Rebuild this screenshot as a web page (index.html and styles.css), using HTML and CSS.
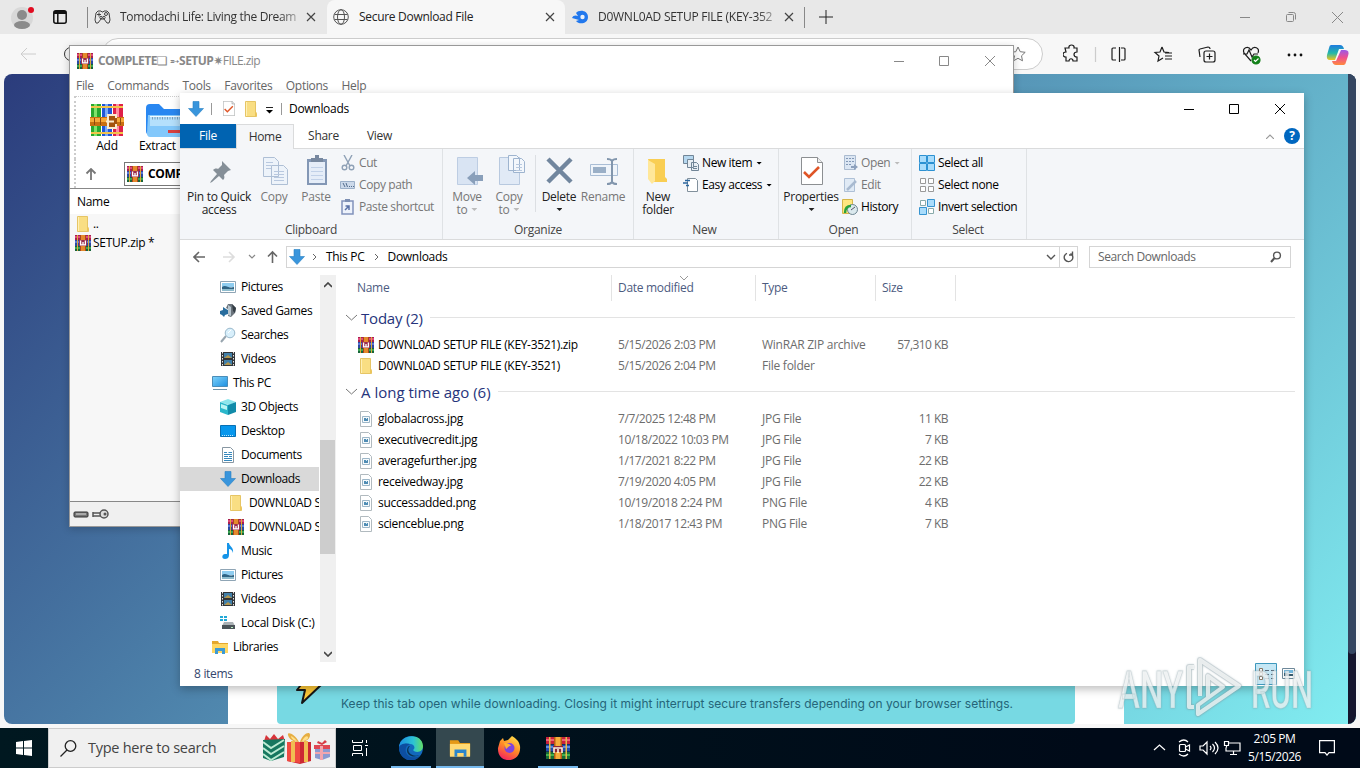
FILE: index.html
```html
<!DOCTYPE html>
<html lang="en">
<head>
<meta charset="utf-8">
<title>Desktop</title>
<link rel="stylesheet" href="styles.css">
</head>
<body>
<svg class="sprite" aria-hidden="true">
  <defs>
    <linearGradient id="gscreen" x1="0" y1="0" x2="1" y2="1"><stop offset="0" stop-color="#7fd3fb"/><stop offset="1" stop-color="#1c8fe0"/></linearGradient>
    <linearGradient id="gedge" x1="0" y1="0" x2="1" y2="0"><stop offset="0" stop-color="#1b8fe0"/><stop offset=".6" stop-color="#2cc3d4"/><stop offset="1" stop-color="#62dd65"/></linearGradient>
    <linearGradient id="gfox" x1=".8" y1="0" x2=".3" y2="1"><stop offset="0" stop-color="#ffe14a"/><stop offset=".5" stop-color="#ff8a26"/><stop offset="1" stop-color="#f5235f"/></linearGradient>
    <linearGradient id="gcopa" x1="0" y1="0" x2="0" y2="1"><stop offset="0" stop-color="#1d7be0"/><stop offset=".55" stop-color="#24b8a8"/><stop offset="1" stop-color="#f3c51c"/></linearGradient>
    <linearGradient id="gcopb" x1="0" y1="0" x2="0" y2="1"><stop offset="0" stop-color="#9b58e8"/><stop offset=".5" stop-color="#ee5090"/><stop offset="1" stop-color="#ff8a3c"/></linearGradient>
  </defs>
  <symbol id="rar" viewBox="0 0 16 16">
    <path fill="#a8204f" d="M0 0h16v5H0z"/><path fill="#e0497a" d="M0 1h16v2H0z"/>
    <path fill="#2a49a0" d="M0 5h16v6H0z"/><path fill="#5b78d8" d="M0 6h16v2H0z"/>
    <path fill="#17643a" d="M0 11h16v5H0z"/><path fill="#3aa552" d="M0 12h16v2H0z"/>
    <path fill="#d9a93c" d="M2 0h1v16H2zM13 0h1v16h-1z"/>
    <path fill="#a9441f" d="M5 0h6v16H5z"/><path fill="#e58a2c" d="M6 0h4v16H6z"/>
    <path fill="#9b2d4d" d="M4 5h8v6H4z"/><path fill="none" stroke="#fff" stroke-width="1.300" d="M5.600 5.500v4.400h4.800V5.500M8 7v3"/>
  </symbol>
  <symbol id="folder" viewBox="0 0 16 16"><path fill="#f9de83" stroke="#e6c565" d="M2.500.500h10v12h1v3h-11z"/><path fill="#fff0b5" d="M3 1h1v14H3z"/><path fill="#ecc55a" d="M12 11h1.500v4H12z"/></symbol>
  <symbol id="down" viewBox="0 0 16 16"><path fill="#3995dc" stroke="#277fc2" stroke-width=".6" d="M5 .5h6v7h4.5L8 15.500.5 7.500H5z"/></symbol>
  <symbol id="picture" viewBox="0 0 16 16"><path fill="#fff" stroke="#8fa5b5" d="M.5 2.500h15v11H.5z"/><path fill="#8fcdf0" d="M2 4h12v4H2z"/><path fill="#2f6484" d="M2 8c4-3 6 2 12 0v2H2z"/><path fill="#8ebccd" d="M2 10h12v2H2z"/></symbol>
  <symbol id="games" viewBox="0 0 16 16"><path fill="#6a737b" d="m8 1 4 0 4 4-1 5-4 4-3-1V6L6 5z"/><path fill="#b7c5ce" d="m8 2 3 2v9l-3-1z"/><path fill="#333d45" d="m12 1 4 4-1 5-2-2z"/><path fill="#286c9d" d="m0 8 3-1V4l3 2 2 1v4l-3 1-1 2-2-2-2-1z"/></symbol>
  <symbol id="search16" viewBox="0 0 16 16"><path stroke="#98a5af" stroke-width="2" d="m1 15 5-6"/><circle cx="10" cy="6" r="4.800" fill="#d8effb" stroke="#99b8cb"/><path stroke="#fff" d="m8 6 3-3"/></symbol>
  <symbol id="video" viewBox="0 0 16 16"><path fill="#303438" d="M1 1h14v14H1z"/><path fill="#4180aa" d="M4 2h8v5H4z"/><path fill="#4180aa" d="M4 9h8v5H4z"/><path fill="#b3964e" d="m4 7 4-3 4 3zM4 14l4-3 4 3z"/><path stroke="#e6e8e9" stroke-dasharray="1.500 1.500" d="M2.500 1v14M13.500 1v14"/></symbol>
  <symbol id="pc" viewBox="0 0 16 16"><path fill="url(#gscreen)" stroke="#4b8db8" d="M.5 1.500h15v10H.5z"/><path stroke="#6f94aa" d="M1 14.500h14"/></symbol>
  <symbol id="cube" viewBox="0 0 16 16"><path fill="#8ce6ec" d="m0 3 8-3 8 3-7 3z"/><path fill="#2bb7cb" d="m0 3 8 3v10l-8-3z"/><path fill="#118ba9" d="m8 6 8-3v10l-8 3z"/><path fill="#baf5f4" d="m1 5 6 2v4L1 9z"/></symbol>
  <symbol id="desk" viewBox="0 0 16 16"><path fill="#0797ed" stroke="#0870b4" d="M.5 2.500h15v11H.5z"/><path stroke="#b8e6ff" stroke-dasharray="1 1" d="M2 12.500h12"/></symbol>
  <symbol id="doc" viewBox="0 0 16 16"><path fill="#fff" stroke="#8897a2" d="M2.500.500h8l3 3v12h-11z"/><path stroke="#3588bd" d="M4 5.500h3M8.500 5.500H12M4 7.500h8M4 9.500h4M9 9.500h3M4 11.500h8M4 13.500h8"/></symbol>
  <symbol id="music" viewBox="0 0 16 16"><path fill="#1594e8" d="M7 0h2c0 3 5 4 4 10-1-3-2-4-4-4v6c0 3-2 4-4 4-4 0-3-5 0-5h2z"/></symbol>
  <symbol id="disk" viewBox="0 0 16 16"><path fill="#22a9d7" d="M0 1h3v2H0zM4 1h3v2H4zM0 4h3v2H0zM4 4h3v2H4z"/><path fill="#aab1b5" d="m4 7h9l2 4H2z"/><path fill="#4b5459" d="M2 10h13v4H2z"/><path fill="#b8edbd" d="M11 12h2v1h-2z"/></symbol>
  <symbol id="library" viewBox="0 0 16 16"><path fill="#e4a82e" d="M0 2h6l1 2h9v10H0z"/><path fill="#ffd762" d="M0 5h16v9H0z"/><path fill="#3d9ad4" d="M3 9h10v6h-3v-3H6v3H3z"/></symbol>
  <symbol id="image" viewBox="0 0 16 16"><path fill="#fff" stroke="#b1babf" d="M2.500.500h8l3 3v12h-11z"/><path fill="#f6fafc" stroke="#9db7c8" d="M4.500 5.500h7v6h-7z"/><path fill="#4f8cb4" d="M6 7h4v3H6z"/><path fill="#c9e7f3" d="M8 7h1v1H8z"/></symbol>
  <symbol id="check" viewBox="0 0 22 28"><path fill="#fff" stroke="#8c8f92" d="M.5.500h16l5 5v22H.5z"/><path fill="#eee" stroke="#8c8f92" d="M16.500.500v5h5"/><path fill="none" stroke="#df5527" stroke-width="2.600" d="m3 15 5 5L18 10"/></symbol>
</svg>

<div class="desktop">
  <section class="browser">
    <div class="tabs">
      <svg class="avatar" width="23" height="24" viewBox="0 0 23 24"><circle cx="11" cy="13" r="11" fill="#d8d8d8"/><circle cx="11" cy="10" r="5" fill="#8b8b8b"/><ellipse cx="11" cy="20" rx="8" ry="4" fill="#8b8b8b"/><circle cx="20" cy="5" r="3" fill="#e10b20"/></svg>
      <svg class="workspace" width="14" height="14" viewBox="0 0 14 14" fill="none" stroke="#111" stroke-width="1.500"><rect x=".8" y=".8" width="12.400" height="12.400" rx="2"/><path stroke-width="3" d="M1 2.500h12"/><path d="M4.800 3v10"/></svg>
      <div class="tab first">
        <svg width="17" height="14" viewBox="0 0 17 14" fill="none" stroke="#444"><path d="M4 1h3l1 1h1l1-1h3l2 2 1 7-1 3h-2l-3-4H7l-3 4H2l-1-3 1-7zM3 4.500h4M5 2.500v4"/><circle cx="12" cy="4" r="1.500"/><circle cx="7" cy="7.500" r="1.200"/><circle cx="10" cy="7.500" r="1.200"/></svg>
        <span class="tabtext t1">Tomodachi Life: Living the Dream</span><svg class="x" viewBox="0 0 10 10"><path d="m1 1 8 8M9 1 1 9"/></svg>
      </div>
      <div class="tab active">
        <svg width="16" height="16" viewBox="0 0 16 16" fill="none" stroke="#555"><circle cx="8" cy="8" r="7.300"/><ellipse cx="8" cy="8" rx="3.500" ry="7.300"/><path d="M1.500 5.500h13M1.500 10.500h13"/></svg>
        <span class="tabtext t2">Secure Download File</span><svg class="x" viewBox="0 0 10 10"><path d="m1 1 8 8M9 1 1 9"/></svg>
      </div>
      <div class="tab last">
        <svg width="16" height="14" viewBox="0 0 16 14"><path fill="#2278ed" d="M4 3C7-1 16 0 16 7S7 15 4 11l3-1L0 8c1-3 4-3 6-2z"/><circle cx="10.500" cy="7" r="2.200" fill="#e8f0fb"/></svg>
        <span class="tabtext t3">D0WNL0AD SETUP FILE (KEY-352</span><svg class="x" viewBox="0 0 10 10"><path d="m1 1 8 8M9 1 1 9"/></svg>
      </div>
      <svg class="plus" width="14" height="14" viewBox="0 0 14 14" stroke="#222"><path d="M0 7h14M7 0v14"/></svg>
      <svg class="wctl" width="104" height="12" viewBox="0 0 104 12" fill="none" stroke="#888"><path d="M0 6.500h10M92 1l11 11M103 1 92 12"/><rect x="46.500" y="3.500" width="7" height="7" rx="1"/><path d="M48.500 1.500h5q2 0 2 2v5"/></svg>
    </div>
    <div class="toolbar">
      <svg class="back" width="16" height="14" viewBox="0 0 16 14" fill="none" stroke="#ccc"><path d="M16 7H1M7 1 1 7l6 6"/></svg>
      <svg class="reload" width="14" height="14" viewBox="0 0 14 14" fill="none" stroke="#333"><circle cx="7" cy="7" r="6.500"/></svg>
      <div class="omnibox"><svg width="18" height="16" viewBox="0 0 18 16" fill="none" stroke="#777"><path d="m9 1 2.200 4.700 5 .600-3.700 3.500 1 5L9 12.300l-4.500 2.500 1-5L1.800 6.300l5-.6z"/></svg></div>
      <svg class="tools" width="290" height="24" viewBox="0 0 290 24" fill="none" stroke="#1d1d1d" stroke-width="1.200">
        <path d="M2 7h4c-1-4 6-4 5 0h3v4c-4 0-4 5 0 5v4h-4c0-3-4-3-4 0H3v-4c-4 0-4-5 0-5z" transform="translate(0 -1)"/>
        <path stroke="#ccc" d="M32.500 5v15"/>
        <path d="M53 6h-3q-1 0-1 1v10q0 1 1 1h3M58 6h3q1 0 1 1v10q0 1-1 1h-3M56.500 5v15"/>
        <path d="m99 5 2 5 5 .500M99 5l-2 5-5 .500 4 3.500-1 5 5-3M102 11h7M102 14h7M102 17h7"/>
        <path d="M137 15l-1-7q0-1 1-1l8-2q2 0 2 2"/><rect x="141" y="9" width="11" height="11" rx="2"/><path d="M146.500 11.500v6M143.500 14.500h6"/>
        <path d="M188 19l-7-8c-2-5 4-8 7-3 3-5 9-2 7 3M180 12h4l2-4 3 7 2-3h4"/><circle cx="193" cy="18" r="4" fill="#128018" stroke="#128018"/><path stroke="#fff" d="m191 18 1.500 1.500 3-3"/>
        <g fill="#111" stroke="none"><circle cx="226" cy="13" r="1.400"/><circle cx="232" cy="13" r="1.400"/><circle cx="238" cy="13" r="1.400"/></g>
        <g stroke="none"><path fill="url(#gcopa)" d="M268 3h9q3 0 4 4h-5l-4 11h-5q-4 0-3-5l2-7q.500-3 2-3z"/><path fill="url(#gcopb)" d="M281 23h-8q-3 0-4-4h4l5-11h4q5 0 3 6l-2 6q-.500 3-2 3z"/></g>
      </svg>
    </div>
    <main class="page">
      <div class="article"><div class="notice"><svg width="28" height="28" viewBox="0 0 28 28"><path fill="#ffca38" stroke="#171717" stroke-width="2" stroke-linejoin="round" d="M12 0 2 13h8L7 26 26 8h-8l4-8z"/></svg><p>Keep this tab open while downloading. Closing it might interrupt secure transfers depending on your browser settings.</p></div></div>
      <div class="pagebar"><div></div></div>
    </main>
  </section>

  <section class="winrar">
    <header class="rartitle"><svg width="16" height="16"><use href="#rar"/></svg><span class="rname"><b>COMPLETE</b>❏ ➵<b>SETUP</b>✷FILE.zip</span>
      <svg class="rctl" width="102" height="12" viewBox="0 0 102 12" fill="none" stroke="#888"><path d="M0 6.500h10M91 1l10 10M101 1 91 11M45.500 1.500h9v9h-9z"/></svg></header>
    <nav class="rarmenu"><span>File</span><span>Commands</span><span>Tools</span><span>Favorites</span><span>Options</span><span>Help</span></nav>
    <div class="rartools">
      <div class="tool"><svg width="36" height="36" viewBox="0 0 36 36"><path fill="#27a82e" d="M2 2h10v32H2z"/><path fill="#7fe36a" d="M5 2h3v32H5z"/><path fill="#2056d8" d="M13 2h10v32H13z"/><path fill="#78aaf8" d="M16 2h3v32h-3z"/><path fill="#df2048" d="M24 2h10v32H24z"/><path fill="#ff8ba2" d="M27 2h3v32h-3z"/><path stroke="#f2c34a" stroke-width="2" d="M2 5h32M2 31h32"/><path fill="#c96f12" d="M1 15h34v9H1z"/><path fill="#f7a93a" d="M1 16h34v4H1z"/><path stroke="#8d4a0c" d="M5.500 16v7M11.500 16v7M31.500 16v7"/><path fill="#a4530d" d="M18 12h10v15H18z"/><path fill="none" stroke="#f9ead0" stroke-width="2" d="M27 16v-3h-8v13h8v-4M17 19.500h8"/></svg><span>Add</span></div>
      <div class="tool"><svg width="36" height="36" viewBox="0 0 36 36"><path fill="#2987f1" d="M0 6q0-4 4-4h9l5 5h18v26H4q-4 0-4-4z"/><path fill="#83c8fb" d="M2 13h34v22H4q-3 0-3-4z"/><path fill="#b5e0fc" d="M4 14h32v10H4z"/><path stroke="#7d9fbb" stroke-width="3" stroke-dasharray="1 1.500" d="M6 16h30"/><path stroke="#f4faff" d="M4 14.500h32"/><path fill="#d94040" d="M22 28h14v3H22z"/></svg><span>Extract</span></div>
    </div>
    <div class="rarpath"><svg width="12" height="12" viewBox="0 0 12 12" fill="none" stroke="#777" stroke-width="1.800"><path d="M6 12V1M1.500 5.500 6 1l4.500 4.500"/></svg><div class="pathbox"><svg width="16" height="16"><use href="#rar"/></svg><b>COMPLETE</b></div></div>
    <div class="rarlist"><div class="rarhead">Name</div><div class="rarrow"><svg width="16" height="16"><use href="#folder"/></svg>..</div><div class="rarrow"><svg width="16" height="16"><use href="#rar"/></svg>SETUP.zip *</div></div>
    <footer class="rarfoot"><svg width="40" height="12" viewBox="0 0 40 12"><rect x="1" y="4" width="14" height="5" rx="1" fill="#777" stroke="#333"/><path stroke="#ddd" d="M3 6h10"/><path fill="none" stroke="#555" stroke-width="1.500" d="M20 5h8M20 8h8M20 4v5"/><circle cx="31" cy="6" r="4" fill="#ddd" stroke="#555" stroke-width="1.500"/><circle cx="32" cy="6" r="1.500" fill="#555"/></svg></footer>
  </section>

  <section class="explorer">
    <header class="titlebar">
      <svg width="16" height="16"><use href="#down"/></svg><i class="bar"></i>
      <svg class="tc" width="12" height="15" viewBox="0 0 22 28" preserveAspectRatio="none"><use href="#check" width="22" height="28"/></svg><svg class="tf" width="16" height="16"><use href="#folder"/></svg>
      <svg class="td" width="7" height="7" viewBox="0 0 7 7"><path d="M0 .5h7" stroke="#222"/><path d="M0 3h7L3.500 6.500z"/></svg><i class="bar b2"></i><span>Downloads</span>
      <svg class="ectl" width="102" height="12" viewBox="0 0 102 12" fill="none" stroke="#000"><path d="M0 6.500h10M91 1l10 10M101 1 91 11M45.500 1.500h9v9h-9z"/></svg>
    </header>
    <nav class="rtabs"><span class="file">File</span><span class="home">Home</span><span class="share">Share</span><span class="view">View</span>
      <svg width="8" height="5" viewBox="0 0 8 5" fill="none" stroke="#999" stroke-width="1.200"><path d="m0 5 4-4 4 4"/></svg><b class="help">?</b></nav>
    <div class="ribbon">
      <div class="group g1"><div class="gbody">
        <div class="big pin"><svg width="32" height="32" viewBox="0 0 32 32"><path fill="#858f98" d="m18 6 9 9-3 1-4 4c1 3 0 4-1 5l-4-4-7 6-2 1 1-2 6-7-4-4c1-1 3-2 5-1l4-4z"/></svg><span>Pin to Quick access</span></div>
        <div class="big w42 off"><svg width="32" height="32" viewBox="0 0 32 32" fill="#edf3fa" stroke="#aebfd5"><path d="M4.500 2.500h11l4 4v15h-15zM12.500 10.500h12l4 4v15h-16z"/><path stroke="#b8c8df" d="M7 7.500h7M7 10.500h5M7 13.500h5M15 16.500h10M15 19.500h10M15 22.500h10M15 25.500h10"/></svg><span>Copy</span></div>
        <div class="big w42 off"><svg width="32" height="32" viewBox="0 0 32 32"><path fill="#8397b5" d="M6 4h20v26H6z"/><path fill="#e5edf8" d="M8 7h16v21H8z"/><path fill="#77889f" d="M10 3h4V0h4v3h4v4H10z"/><path stroke="#c1d1e8" d="M10 12.500h12M10 16.500h12M10 20.500h12M10 24.500h12"/></svg><span>Paste</span></div>
        <div class="smalls off">
          <div><svg viewBox="0 0 16 16" fill="none" stroke="#8fa1b6" stroke-width="1.400"><path d="m4 0 6 11M12 0 6 11"/><circle cx="4.500" cy="12.500" r="2.300"/><circle cx="11.500" cy="12.500" r="2.300"/></svg>Cut</div>
          <div><svg viewBox="0 0 16 16"><path fill="#ccd9ea" stroke="#9bafc8" d="M.5 4.500h14v7H.5z"/><path stroke="#526c8d" d="m3 6 2 4M6 6l1.500 4M9 9.500h1M11 9.500h1M13 9.500h1"/></svg>Copy path</div>
          <div><svg viewBox="0 0 16 16"><path fill="#edf2fb" stroke="#8192bc" stroke-width="1.500" d="M2 2h11v13H2z"/><path fill="#7d8fb3" d="M5 0h5v3H5z"/><path fill="none" stroke="#5a72a8" stroke-width="1.500" d="m5 11 4-4M5.500 7H9v4"/></svg>Paste shortcut</div>
        </div></div><div class="glabel">Clipboard</div></div>
      <div class="group g2"><div class="gbody">
        <div class="big w42 off"><svg width="32" height="32" viewBox="0 0 32 32"><path fill="#d9e4f3" stroke="#bdcde3" d="M5.500 2.500h20v27h-20z"/><path fill="#899fba" d="m15 23 8-7v4h8v6h-8v4z"/></svg><span>Move<br>to <i class="tri"></i></span></div>
        <div class="big w42 off"><svg width="32" height="32" viewBox="0 0 32 32" fill="#e1eaf6" stroke="#b8c9df"><path d="M5.500 2.500h20v27h-20z"/><path fill="#f3f7fc" stroke="#9eb4cf" d="M14.500.500h8l3 3v12h-11zM19.500 3.500h8l3 3v11h-11z"/><path d="M22 9.500h6M22 12.500h6M22 15.500h6"/></svg><span>Copy<br>to <i class="tri"></i></span></div>
        <i class="vs"></i>
        <div class="big w42"><svg width="32" height="32" viewBox="0 0 32 32"><path stroke="#71869e" stroke-width="4.500" d="m4 4 23 23M27 4 4 27"/></svg><span>Delete<br><i class="tri"></i></span></div>
        <div class="big w46 off"><svg width="32" height="32" viewBox="0 0 32 32"><path fill="#eff4fa" stroke="#a9bdd5" d="M2.500 9.500h27v11h-27z"/><path fill="#9aafc7" d="M5 12h13v6H5z"/><path fill="none" stroke="#8296ad" stroke-width="2" d="M24 5v22M19 4q4 0 5 2 1-2 5-2M19 29q4 0 5-2 1 2 5 2"/></svg><span>Rename</span></div>
        </div><div class="glabel">Organize</div></div>
      <div class="group g3"><div class="gbody">
        <div class="big w42"><svg width="32" height="32" viewBox="0 0 32 32"><path fill="#f9ce53" d="M5 4h17v18l2 2v3H11z"/><path fill="#ffe799" d="m5 5 7 4v17l-3 3-4-5z"/></svg><span>New<br>folder</span></div>
        <div class="smalls"><div><svg viewBox="0 0 16 16" fill="#e8eef3" stroke="#718597"><path fill="#b5d7ef" d="M.5.500h10v8H.5z"/><path d="M4.500 4.500h6v8h-6zM8.500 7.500h5l2 2v6h-7z"/><path d="M10 11.500h4M10 13.500h4"/></svg>New item <i class="tri"></i></div><div><svg viewBox="0 0 16 16"><path fill="#fff" stroke="#81909c" d="M4.500 1.500h8l2 2v11h-10z"/><path stroke="#2c679f" stroke-width="1.500" d="M2 3.500h5M0 6h5M3 8.500h3"/></svg>Easy access <i class="tri"></i></div></div>
        </div><div class="glabel">New</div></div>
      <div class="group g4"><div class="gbody">
        <div class="big w54"><svg width="32" height="32" viewBox="-5 -2 32 32"><use href="#check" width="22" height="28"/></svg><span>Properties<br><i class="tri"></i></span></div>
        <div class="smalls"><div class="off"><svg viewBox="0 0 16 16"><path fill="#dbe6f3" stroke="#aabbd0" d="M2.500.500h11v14h-11z"/><path stroke="#8298b6" stroke-dasharray="2 1" d="M4 3.500h8M4 6.500h8M4 9.500h5"/><path fill="#8ca0bc" d="M9 11h3V9l4 3-4 3v-2H9z"/></svg>Open <i class="tri"></i></div><div class="off"><svg viewBox="0 0 16 16"><path fill="#e0eaf5" stroke="#aec0d6" d="M2.500 1.500h10v13h-10z"/><path stroke="#a9bad0" stroke-width="2.500" d="m5 13 9-9"/></svg>Edit</div><div><svg viewBox="0 0 16 16"><path fill="#ffe680" stroke="#d5b64b" d="M.5.500h10v14H.5z"/><circle cx="10.500" cy="10.500" r="5" fill="#dbe9ee" stroke="#6d8592"/><path fill="none" stroke="#2aa23c" stroke-width="2.500" d="M3 14q0-7 6-7"/><path stroke="#556" d="m9 11 4-3"/></svg>History</div></div>
        </div><div class="glabel">Open</div></div>
      <div class="group g5"><div class="gbody"><div class="smalls">
        <div><svg viewBox="0 0 16 16" fill="#a9dcfb" stroke="#2c91d2"><path d="M.5.500h7v7h-7zM8.500.500h7v7h-7zM.5 8.500h7v7h-7zM8.500 8.500h7v7h-7z"/></svg>Select all</div>
        <div><svg viewBox="0 0 16 16" fill="#fff" stroke="#999"><path d="M1.500 1.500h5v5h-5zM9.500 1.500h5v5h-5zM1.500 9.500h5v5h-5zM9.500 9.500h5v5h-5z"/></svg>Select none</div>
        <div><svg viewBox="0 0 16 16" fill="#a9dcfb" stroke="#3694d0"><path fill="#fff" stroke="#8aa" d="M1.500 1.500h5v5h-5zM9.500 9.500h5v5h-5z"/><path d="M8.500.500h7v7h-7zM.5 8.500h7v7h-7z"/></svg>Invert selection</div></div></div><div class="glabel">Select</div></div>
    </div>
    <div class="address">
      <svg class="navs" width="88" height="16" viewBox="0 0 88 16" fill="none" stroke="#666" stroke-width="1.600"><path d="M12 8H1M6 3 1 8l5 5"/><path stroke="#ddd" d="M30 8h11M36 3l5 5-5 5"/><path stroke="#888" stroke-width="1.200" d="m56 6 3 3 3-3"/><path d="M79.500 14V3M75 7.500 79.500 3 84 7.500"/></svg>
      <div class="crumbs"><svg width="16" height="16"><use href="#down"/></svg><svg class="chev" viewBox="0 0 5 8"><path d="m1 1 3 3-3 3"/></svg><span>This PC</span><svg class="chev c2" viewBox="0 0 5 8"><path d="m1 1 3 3-3 3"/></svg><span>Downloads</span>
        <svg class="dropdown" width="10" height="6" viewBox="0 0 10 6" fill="none" stroke="#555" stroke-width="1.400"><path d="m1 1 4 4 4-4"/></svg></div>
      <div class="refresh"><svg width="11" height="12" viewBox="0 0 11 12" fill="none" stroke="#555" stroke-width="1.400"><path d="M7.500 2.500A4.300 4.300 0 1 1 4 2.300M9.500.500v3.500H6"/></svg></div>
      <div class="sbox"><span>Search Downloads</span><svg width="12" height="12" viewBox="0 0 12 12" fill="none" stroke="#555" stroke-width="1.400"><circle cx="7" cy="4.500" r="3.400"/><path stroke-width="2" d="M4.500 7 1 11"/></svg></div>
    </div>
    <div class="content">
      <aside class="tree">
        <div><svg><use href="#picture"/></svg><span>Pictures</span></div><div><svg><use href="#games"/></svg><span>Saved Games</span></div><div><svg><use href="#search16"/></svg><span>Searches</span></div><div><svg><use href="#video"/></svg><span>Videos</span></div>
        <div class="root"><svg><use href="#pc"/></svg><span>This PC</span></div><div><svg><use href="#cube"/></svg><span>3D Objects</span></div><div><svg><use href="#desk"/></svg><span>Desktop</span></div><div><svg><use href="#doc"/></svg><span>Documents</span></div><div class="sel"><svg><use href="#down"/></svg><span>Downloads</span></div>
        <div class="sub"><svg><use href="#folder"/></svg><span>D0WNL0AD SETUP</span></div><div class="sub"><svg><use href="#rar"/></svg><span>D0WNL0AD SETUP</span></div><div><svg><use href="#music"/></svg><span>Music</span></div><div><svg><use href="#picture"/></svg><span>Pictures</span></div><div><svg><use href="#video"/></svg><span>Videos</span></div><div><svg><use href="#disk"/></svg><span class="disk">Local Disk (C:)</span></div><div class="root"><svg><use href="#library"/></svg><span>Libraries</span></div>
      </aside>
      <div class="scroll"><svg width="8" height="6" viewBox="0 0 8 6"><path d="m0 5 4-4 4 4"/></svg><i></i><svg width="8" height="6" viewBox="0 0 8 6"><path d="m0 1 4 4 4-4"/></svg></div>
      <div class="files">
        <div class="cols"><span>Name</span><span>Date modified<svg class="sort" width="8" height="5" viewBox="0 0 8 5" fill="none" stroke="#999"><path d="m0 0 4 4 4-4"/></svg></span><span>Type</span><span>Size</span></div>
        <div class="section s1"><svg width="11" height="7" viewBox="0 0 11 7"><path d="m0 1 5.500 5L11 1"/></svg><span>Today (2)</span><hr></div>
        <div class="row"><span><svg><use href="#rar"/></svg><em class="caps">D0WNL0AD SETUP FILE (KEY-3521).zip</em></span><span>5/15/2026 2:03 PM</span><span>WinRAR ZIP archive</span><span>57,310 KB</span></div>
        <div class="row"><span><svg><use href="#folder"/></svg><em class="caps">D0WNL0AD SETUP FILE (KEY-3521)</em></span><span>5/15/2026 2:04 PM</span><span>File folder</span><span></span></div>
        <div class="section s2"><svg width="11" height="7" viewBox="0 0 11 7"><path d="m0 1 5.500 5L11 1"/></svg><span>A long time ago (6)</span><hr></div>
        <div class="row"><span><svg><use href="#image"/></svg><em>globalacross.jpg</em></span><span>7/7/2025 12:48 PM</span><span>JPG File</span><span>11 KB</span></div>
        <div class="row"><span><svg><use href="#image"/></svg><em>executivecredit.jpg</em></span><span>10/18/2022 10:03 PM</span><span>JPG File</span><span>7 KB</span></div>
        <div class="row"><span><svg><use href="#image"/></svg><em>averagefurther.jpg</em></span><span>1/17/2021 8:22 PM</span><span>JPG File</span><span>22 KB</span></div>
        <div class="row"><span><svg><use href="#image"/></svg><em>receivedway.jpg</em></span><span>7/19/2020 4:05 PM</span><span>JPG File</span><span>22 KB</span></div>
        <div class="row"><span><svg><use href="#image"/></svg><em>successadded.png</em></span><span>10/19/2018 2:24 PM</span><span>PNG File</span><span>4 KB</span></div>
        <div class="row"><span><svg><use href="#image"/></svg><em>scienceblue.png</em></span><span>1/18/2017 12:43 PM</span><span>PNG File</span><span>7 KB</span></div>
      </div>
    </div>
    <footer class="status"><span>8 items</span><svg width="41" height="22" viewBox="0 0 41 22"><path fill="#c5e7f5" stroke="#3e98bd" d="M.5.500h21v21H.5z"/><g fill="#fff" stroke="#8a7765"><path d="M4.500 5.500h3v3h-3zM4.500 9.500h3v3h-3zM4.500 13.500h3v3h-3z"/></g><path stroke="#567" stroke-dasharray="4 2" d="M10 7.500h9M10 11.500h9M10 15.500h9"/><path fill="#fff" stroke="#6e899a" d="M27.500 5.500h12v10h-12z"/><path fill="#73b8df" d="M29 7h9v3h-9z"/><path fill="#34576b" d="M29 10h3l2 1h4v2h-9z"/></svg></footer>
  </section>

  <footer class="taskbar">
    <div class="start"><svg width="16" height="16" viewBox="0 0 16 16" fill="#fff"><path d="m0 2 7-1v6.500H0zM8 .9 16 0v7.500H8zM0 8.500h7V15l-7-1zM8 8.500h8V16l-8-1z"/></svg></div>
    <div class="find"><svg width="17" height="17" viewBox="0 0 17 17" fill="none" stroke="#222" stroke-width="1.300"><circle cx="10.500" cy="6" r="5.300"/><path d="M7 10 .5 16.500"/></svg><span>Type here to search</span>
      <svg class="gifts" width="68" height="32" viewBox="0 0 68 32"><path fill="#d8343a" d="m1 9 2-6 4 4 4-5 4 5 5-4 2 6z"/><path fill="#16775f" d="m0 8 22-1-1 18-13 4L0 26z"/><path fill="none" stroke="#bcebd3" stroke-width="2" d="m0 10 8 6 13-8M0 16l8 6 13-8M0 22l8 6 13-8"/><path fill="#cc2934" d="M24 10h24v19l-11 3-13-3z"/><path fill="#f04941" d="M24 10h13v21l-13-2z"/><path fill="#f1bd52" d="M28 9h4v21h-4zM41 9h4v21h-4z"/><path fill="#e6ae43" d="M36 10C32 2 24-1 25 3s5 7 11 7zM37 10C40 1 47-1 47 3s-4 7-10 7z"/><path fill="#ffdf8a" d="M34 9C31 5 27 3 28 5s3 4 6 4zM39 9c2-4 5-6 6-4s-3 4-6 4z"/><path fill="#8b9ad0" d="M52 16h15v9l-8 3-7-2z"/><path fill="#df4754" d="M51 13h16v4H51z"/><path fill="#f3a5ad" d="M57 14h3v14h-3zM52 20h15v2H52z"/><path fill="#d73b46" d="m59 13-5-2 1-2 4 2 3-3 2 2z"/></svg></div>
    <div class="apps">
      <div class="view-btn"><svg width="17" height="16" viewBox="0 0 17 16" fill="none" stroke="#fff"><path d="M.5 0v2.500h10V0M.5 16v-2.500h10V16M1.500 5.500h8v5h-8zM14.500 0v3M14.500 8v8M13 5.500h3"/></svg></div>
      <div class="open"><svg width="24" height="24" viewBox="0 0 24 24"><circle cx="12" cy="12" r="12" fill="#1269bd"/><path fill="url(#gedge)" d="M0 11C1-2 23-4 24 10c0 7-8 7-10 4 3-2 1-6-3-6C6 7 1 9 0 11z"/><path fill="#0d4ea0" d="M8 10C4 15 9 25 21 20c-7 9-20 4-21-8 1-5 8-5 11-4z"/><path fill="#0a3355" d="M11 10c-5 5 2 12 10 9-3 2-12 3-13-4 0-3 1-5 3-5z"/></svg></div>
      <div class="open current"><svg width="22" height="19" viewBox="0 0 24 20"><path fill="#e59a17" d="M1 1h9l2 3h11v14H1z"/><path fill="#ffda74" d="M1 5h22v14H1z"/><path fill="#2b86cb" d="M6 11h13v8h-3v-4H9v4H6z"/></svg></div>
      <div><svg width="24" height="24" viewBox="0 0 24 24"><path fill="url(#gfox)" d="M3 5l3-3 1 3 4-1 4-4q7 4 8 10C25 28 0 29 1 12z"/><circle cx="12.500" cy="12" r="5" fill="#8043dc"/><path fill="#ffb02f" d="M7 7c4 0 6 1 7 3-3 0-3 2-5 3z"/></svg></div>
      <div class="open"><svg width="24" height="22" viewBox="0 0 24 22"><path fill="#c9213c" d="M0 0h24v7H0z"/><path fill="#ee6078" d="M0 2h24v2H0z"/><path fill="#224da8" d="M0 7.500h24v7H0z"/><path fill="#5c8ae0" d="M0 9h24v2H0z"/><path fill="#176d36" d="M0 15h24v7H0z"/><path fill="#43b04c" d="M0 17h24v2H0z"/><path fill="#e6b848" d="M3 0h1.500v22H3zM19.500 0H21v22h-1.500z"/><path fill="#b75d14" d="M8 0h8v22H8z"/><path fill="#f5ad3a" d="M9.500 0h5v22h-5z"/><path fill="#8d2333" d="M7 9h10v6H7z"/><path fill="none" stroke="#f7f0e2" stroke-width="1.600" d="M8 16v-5h8v5M12 12v4"/></svg></div>
    </div>
    <div class="tray"><svg width="90" height="18" viewBox="0 0 90 18" fill="none" stroke="#fff" stroke-width="1.200"><path d="m1 11 5.500-5 5.500 5"/><rect x="26.500" y="5.500" width="6" height="7" rx="1"/><path d="m32.500 8 4-2v6l-4-2M26 3q5-4 9 0M26 15q5 4 9 0M47 7h3l4-4v12l-4-4h-3zM57 7q2 2 0 4M59.500 5q4 4 0 8M62 3q6 6 0 12M75 4h12v8H73V8.500M77 15.500h7M80.500 12v3M71.500 2.500h4v4h-4zM73.500 6.500v2"/></svg>
      <div class="clock"><span>2:05 PM</span><span>5/15/2026</span></div><svg class="note" width="16" height="16" viewBox="0 0 16 16" fill="none" stroke="#fff" stroke-width="1.200"><path d="M.6.600h14.800v12H10l-2 2.500-2-2.500H.6z"/></svg></div>
  </footer>

  <svg class="watermark" width="200" height="64" viewBox="0 0 200 64"><g fill="#fff" fill-opacity=".7" stroke="#9eb2b8" stroke-opacity=".35" stroke-width="1"><text x="3" y="52" textLength="65" lengthAdjust="spacingAndGlyphs">ANY</text><text x="136" y="52" textLength="62" lengthAdjust="spacingAndGlyphs">RUN</text></g><path fill="none" stroke="#91a5ab" stroke-opacity=".3" stroke-width="6" stroke-linejoin="round" d="M79 11h-5v40h5M85 40V4l39 26-41 28V49l25-18-15-11v22"/><path fill="none" stroke="#fff" stroke-opacity=".7" stroke-width="4" stroke-linejoin="round" d="M79 11h-5v40h5M85 40V4l39 26-41 28V49l25-18-15-11v22"/></svg>
</div>
</body>
</html>
```
FILE: styles.css
```css
* { box-sizing: border-box; }
body { margin: 0; overflow: hidden; font: 12px/16px "Open Sans", "Noto Sans", "DejaVu Sans", sans-serif; letter-spacing: -.3px; color: #000; }
svg { flex: none; display: block; }
i { font-style: normal; }
span, b, p { white-space: nowrap; }
.sprite { position: absolute; width: 0; height: 0; }
.desktop { position: relative; width: 1360px; height: 768px; overflow: hidden; background: #f7f7f7; }

.browser { height: 728px; display: flex; flex-direction: column; }
.tabs { height: 34px; background: #e8e8e8; display: flex; align-items: center; }
.avatar { margin-left: 11px; }
.workspace { margin-left: 19px; }
.tab { height: 34px; display: flex; align-items: center; color: #333; }
.tab.first { width: 240px; margin-left: 20px; padding-left: 6px; border-image: linear-gradient(transparent 8px, #888 8px, #888 27px, transparent 27px) 1; border-left: 1px solid; }
.tab.active { width: 238px; background: #f7f7f7; border-radius: 8px 8px 0 0; padding-left: 6px; color: #222; }
.tab.last { width: 240px; padding-left: 7px; border-image: linear-gradient(transparent 8px, #888 8px, #888 27px, transparent 27px) 1; border-right: 1px solid; }
.tabtext { overflow: hidden; margin-left: 9px; }
.t1 { width: 181px; -webkit-mask-image: linear-gradient(90deg, #000 88%, #0003); letter-spacing: -.33px; }
.t2 { width: 181px; margin-left: 10px; }
.t3 { width: 181px; margin-left: 10px; -webkit-mask-image: linear-gradient(90deg, #000 88%, #0003); letter-spacing: -.26px; }
.x { width: 10px; height: 10px; margin-left: 5px; stroke: #444; stroke-width: 1.2; }
.plus { margin-left: 14px; }
.wctl { margin-left: auto; margin-right: 16px; }
.toolbar { height: 40px; display: flex; align-items: center; padding-bottom: 1px; }
.back { margin-left: 20px; }
.reload { margin-left: 28px; }
.omnibox { width: 941px; height: 32px; margin-left: 24px; background: #fff; border: 1px solid #ccc; border-radius: 16px; display: flex; justify-content: flex-end; align-items: center; padding-right: 15px; }
.tools { margin-left: 20px; }
.page { height: 650px; margin: 0 4px; border-radius: 8px; overflow: hidden; display: flex; background: linear-gradient(135deg, #2b3c7c, #81edf1); }
.article { width: 896px; margin: 300px 0 0 224px; background: #fff; padding: 270px 49px 0; }
.notice { height: 80px; background: #77d9e3; border-radius: 0 0 4px 4px; display: flex; padding: 33px 0 0 18px; gap: 18px; }
.notice p { font: 12px/18px Inter, sans-serif; letter-spacing: .025px; color: #256579; margin: 18px 0 0; }
.pagebar { margin-left: auto; width: 8px; background: #15152d; }
.pagebar div { height: 580px; background: #344560; border-radius: 0 0 4px 4px; }

.winrar { position: absolute; left: 69px; top: 45px; width: 945px; height: 482px; background: #fff; border: 1px solid #999; box-shadow: 0 2px 8px #0003; display: flex; flex-direction: column; }
.rartitle { height: 30px; display: flex; align-items: center; padding-left: 7px; color: #888; }
.rname { margin-left: 5px; letter-spacing: -.55px; }
.rctl { margin-left: auto; margin-right: 17px; }
.rarmenu { height: 20px; display: flex; align-items: center; gap: 13.5px; padding-left: 6px; color: #666; letter-spacing: -.3px; }
.rartools { height: 63px; margin-left: 4px; border-left: 2px dotted #ccc; border-top: 1px dotted #ccc; display: flex; padding-left: 13px; gap: 21px; }
.tool { height: 58px; width: 36px; padding-top: 5px; display: flex; flex-direction: column; align-items: center; gap: 0; }
.tool + .tool { align-items: flex-start; }
.tool + .tool span { margin-left: -7px; }
.rarpath { height: 29px; margin-left: 4px; border-left: 2px dotted #ccc; display: flex; align-items: center; padding-left: 9px; }
.pathbox { height: 24px; border: 1px solid #777; flex: 1; display: flex; align-items: center; gap: 5px; padding-left: 2px; margin: 0 8px 0 27px; }
.rarlist { height: 314px; background: #f7f7f7; border: 1px solid #888; border-width: 1px 0; }
.rarhead { height: 25px; line-height: 25px; background: #fff; padding-left: 7px; }
.rarrow { height: 19px; display: flex; align-items: center; padding-left: 5px; gap: 2px; }
.rarfoot { flex: 1; background: #f0f0f0; padding: 6px 3px; }

.explorer { position: absolute; left: 180px; top: 93px; width: 1124px; height: 593px; background: #fff; box-shadow: 0 3px 9px #0004; display: flex; flex-direction: column; }
.titlebar { height: 31px; display: flex; align-items: center; padding-left: 8px; }
.bar { width: 1px; height: 12px; background: #999; margin-left: 7px; }
.tc { margin-left: 11px; }
.tf { margin-left: 8px; }
.td { margin-left: 7px; margin-top: 4px; }
.b2 { margin-left: 8px; margin-right: 7px; }
.ectl { margin-left: auto; margin-right: 18px; }
.rtabs { height: 24px; display: flex; line-height: 24px; color: #333; text-align: center; align-items: center; }
.file { width: 56px; background: #0063b1; color: #fff; }
.home { width: 58px; height: 25px; background: #f5f6f8; border: 1px solid #dadbdc; border-bottom: 0; position: relative; z-index: 1; align-self: flex-start; line-height: 23px; }
.share { width: 59px; }
.view { width: 53px; }
.rtabs svg { margin-left: auto; }
.help { width: 16px; height: 16px; border-radius: 50%; background: #0067c0; color: #fff; line-height: 16px; margin: 0 4px 0 10px; }
.ribbon { height: 92px; background: #f4f6f9; border: solid #dadbdc; border-width: 1px 0; display: flex; }
.group { border-right: 1px solid #dfe2e5; display: flex; flex-direction: column; }
.g1 { width: 263px; } .g2 { width: 191px; } .g3 { width: 145px; } .g4 { width: 133px; } .g5 { width: 115px; }
.gbody { height: 72px; display: flex; padding: 3px 0 0 3px; }
.g1 .gbody { padding-left: 4px; }
.g4 .gbody { padding-left: 5px; }
.glabel { text-align: center; color: #444; line-height: 18px; letter-spacing: -.25px; }
.g3 .glabel { padding-right: 3px; }
.g4 .glabel { padding-right: 3px; }
.g5 .glabel { padding-right: 2px; }
.big { display: flex; flex-direction: column; align-items: center; padding-top: 3px; color: #222; gap: 3px; letter-spacing: -.27px; }
.big svg { margin-left: 1px; }
.big span { text-align: center; line-height: 13px; white-space: normal; }
.pin { width: 70px; } .w42 { width: 42px; } .w46 { width: 46px; } .w54 { width: 54px; }
.pin + .w42 { margin-left: -1px; }
.big.off, .off { color: #777; }
.vs { width: 1px; height: 57px; margin: 3px 2px 0 5px; background: #dcdfe3; }
.smalls { margin-left: 4px; letter-spacing: -.4px; }
.g1 .smalls { margin-left: 3px; }
.smalls div { height: 22px; display: flex; align-items: center; white-space: nowrap; gap: 3px; }
.smalls svg { width: 16px; height: 16px; }
.tri { display: inline-block; width: 6px; height: 3px; background: currentColor; clip-path: polygon(0 0, 100% 0, 50% 100%); vertical-align: 3px; margin-left: 1px; }
.off .tri { background: #bbb; }
.address { height: 34px; display: flex; align-items: center; }
.navs { margin-left: 13px; }
.crumbs { margin-left: 5px; width: 774px; height: 22px; border: 1px solid #d5d5d5; display: flex; align-items: center; padding: 0 3px 0 2px; }
.chev { width: 5px; height: 8px; margin: 0 9px 0 7px; fill: none; stroke: #666; }
.chev.c2 { margin: 0 9px; }
.dropdown { margin-left: auto; }
.refresh { width: 18px; height: 22px; border: 1px solid #d5d5d5; border-left: 0; display: grid; place-items: center; }
.sbox { width: 202px; height: 22px; margin-left: 11px; border: 1px solid #d5d5d5; display: flex; align-items: center; justify-content: space-between; padding: 0 8px; color: #666; letter-spacing: -.4px; }
.sbox { letter-spacing: -.38px; }
.content { height: 388px; display: flex; padding-top: 1px; }
.tree { width: 140px; overflow: hidden; letter-spacing: -.38px; }
.tree div { height: 24px; display: flex; align-items: center; gap: 5px; padding-left: 40px; margin-right: 1px; overflow: hidden; }
.tree svg, .row svg { width: 16px; height: 16px; }
.tree .root { padding-left: 32px; }
.tree .sub { padding-left: 48px; letter-spacing: -.3px; }
.tree .sel { background: #d9d9d9; }
.disk { letter-spacing: -.2px; }
.scroll { width: 16px; background: #f0f0f0; display: flex; flex-direction: column; align-items: center; justify-content: space-between; padding: 7px 0 5px; }
.scroll svg { fill: none; stroke: #444; stroke-width: 1.6; }
.scroll i { width: 15px; height: 114px; background: #cdcdcd; margin: 55px 1px 0 0; }
.files { flex: 1; padding-left: 15px; }
.cols { display: grid; grid-template-columns: 261px 144px 120px 80px; height: 26px; color: #4c5b7f; line-height: 25px; letter-spacing: -.3px; }
.cols span { border-right: 1px solid #e3e3e3; padding-left: 6px; position: relative; }
.sort { position: absolute; left: 68px; top: 1px; }
.section { height: 33px; display: flex; align-items: center; font-size: 15px; color: #26347c; padding-right: 9px; letter-spacing: 0; }
.section.s1 { padding-bottom: 1px; height: 33px; padding-top: 1px; letter-spacing: -.2px; }
.section.s2 { margin-top: -1px; }
.section svg { fill: none; stroke: #777; margin: 0 4px 0 -5px; }
.section hr { flex: 1; border: 0; border-top: 1px solid #e3e3e3; margin: 0 0 0 7px; }
.row { height: 21px; display: grid; grid-template-columns: 261px 144px 116px 76px; align-items: center; color: #6d6d6d; letter-spacing: -.42px; }
.row > span { padding-left: 6px; }
.row > span:nth-child(3) { letter-spacing: -.25px; }
.row > span:first-child { display: flex; gap: 4px; color: #000; padding-left: 7px; letter-spacing: -.3px; }
.row > span:last-child { text-align: right; padding: 0; letter-spacing: -.55px; }
em { font-style: normal; }
em.caps { letter-spacing: -.33px; }
.status { height: 24px; display: flex; justify-content: space-between; align-items: center; padding: 0 8px 0 14px; color: #34466c; }

.taskbar { height: 40px; background: linear-gradient(90deg, #001820, #000a18 80%); display: flex; }
.start { width: 48px; display: grid; place-items: center; }
.find { width: 288px; background: #f0f0f0; border: 1px solid #ccc; display: flex; align-items: center; padding-left: 11px; font-size: 14.5px; letter-spacing: -.26px; color: #444; gap: 11px; }
.gifts { margin-left: auto; margin-right: 4px; }
.apps { display: flex; }
.apps div { width: 48px; margin-right: 1px; display: grid; place-items: center; }
.apps .view-btn { margin-right: 3px; }
.apps .open { background: linear-gradient(#76b9ed, #76b9ed) 4px 38px / 40px 2px no-repeat; }
.apps .current { background: linear-gradient(transparent 38px, #76b9ed 38px), #34484f; }
.tray { margin-left: auto; display: flex; align-items: center; color: #fff; }
.clock { width: 74px; margin-left: -6px; display: flex; flex-direction: column; text-align: center; line-height: 18px; letter-spacing: -.42px; padding-left: 1px; }
.clock { position: relative; }
.note { margin: 0 25px 0 8px; }
.watermark { position: absolute; left: 1115px; top: 656px; filter: drop-shadow(0 0 1px #6a858d88); }
.watermark text { font: 500 51px Roboto, sans-serif; letter-spacing: 0; }
```
